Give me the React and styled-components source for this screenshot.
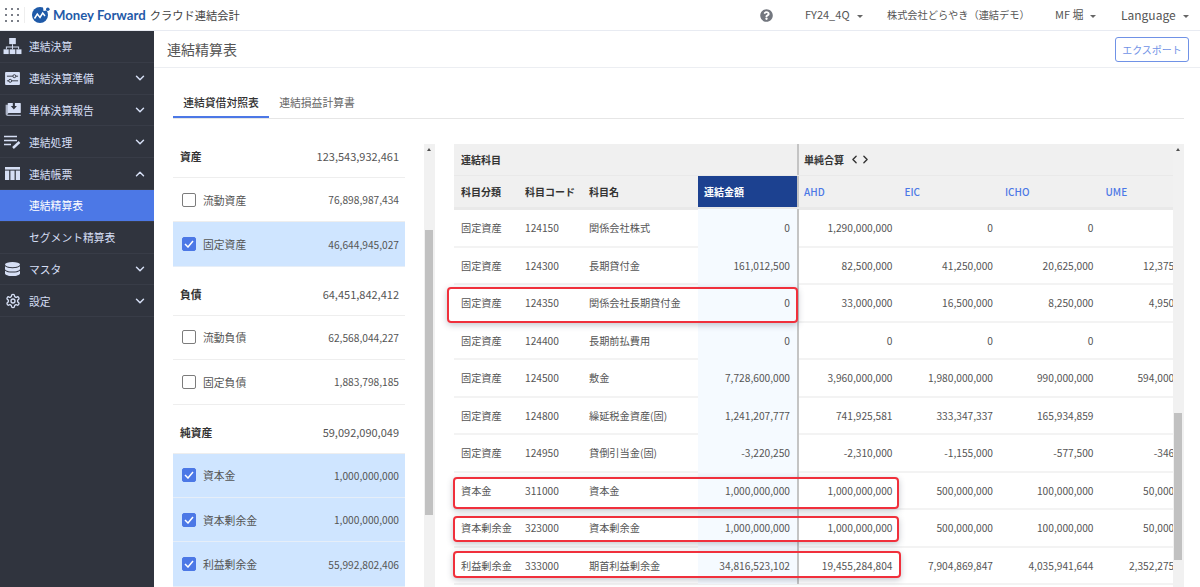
import styled, { createGlobalStyle } from "styled-components";
import { LuSettings } from "react-icons/lu";
import { FaQuestionCircle } from "react-icons/fa";
import { FiChevronDown, FiChevronUp, FiChevronLeft, FiChevronRight } from "react-icons/fi";

const GlobalStyle = createGlobalStyle`
  html, body {
    margin: 0;
    padding: 0;
    height: 587px;
    overflow: hidden;
    background: #fff;
    font-family: "Noto Sans CJK JP", "Noto Sans", sans-serif;
    color: #4a4a4a;
  }
`;

const OrgIcon = () => (
  <svg width="19" height="17" viewBox="0 0 20 18" fill="currentColor">
    <rect x="6.5" y="0" width="7" height="6.5" />
    <path d="M9.5 6.5h1V9h6.5v3h-1v-2h-5.500v2h-1v-2H4v2H3V9h6.500z" />
    <rect x="0.5" y="12" width="5.5" height="5" />
    <rect x="7" y="12" width="6" height="5" />
    <rect x="14" y="12" width="5.5" height="5" />
  </svg>
);

const SlidersIcon = () => (
  <svg width="15" height="13" viewBox="0 0 16 14">
    <rect width="16" height="14" rx="1" fill="currentColor" />
    <path d="M2 4.500h12M2 9.500h12" stroke="#30343e" strokeWidth="1" />
    <circle cx="10" cy="4.500" r="1.600" fill="currentColor" stroke="#30343e" />
    <circle cx="5.500" cy="9.500" r="1.600" fill="currentColor" stroke="#30343e" />
  </svg>
);

const InboxIcon = () => (
  <svg width="16" height="13" viewBox="0 0 18 15" fill="currentColor">
    <rect x="3" y="0" width="15" height="11.500" rx="0.500" />
    <path d="M8.800 0h2.400v3.500h2.300L10 7.500 6.500 3.500h2.300z" fill="#30343e" />
    <path d="M0.500 2v10.500C0.500 14 1.500 15 3 15h15v-1.500H3.500c-1.200 0-1.200-1 0-1V2z" opacity="0.75" />
  </svg>
);

const EditListIcon = () => (
  <svg width="17" height="14" viewBox="0 0 17 14" fill="none" stroke="currentColor">
    <path d="M0 1.500h13M0 5.500h13M0 9.500h7" strokeWidth="1.300" />
    <path d="M9 13l6.500-6" strokeWidth="2.400" />
  </svg>
);

const TableIcon = () => (
  <svg width="15" height="13" viewBox="0 0 15 13" fill="currentColor">
    <rect width="15" height="2.600" />
    <rect y="3.600" width="4.200" height="9.400" />
    <rect x="5.400" y="3.600" width="4.200" height="9.400" />
    <rect x="10.800" y="3.600" width="4.200" height="9.400" />
  </svg>
);

const DbIcon = () => (
  <svg width="15" height="14" viewBox="0 0 15 14" fill="currentColor">
    <ellipse cx="7.500" cy="2.600" rx="7.500" ry="2.600" />
    <path d="M0 4.300c1.400 1.300 4.200 1.900 7.500 1.900S13.600 5.600 15 4.300V7c0 1.400-3.400 2.600-7.500 2.600S0 8.400 0 7z" />
    <path d="M0 8.700c1.400 1.300 4.200 1.900 7.500 1.900s6.100-.6 7.500-1.900v2.700c0 1.400-3.400 2.600-7.500 2.600S0 12.800 0 11.400z" />
  </svg>
);

const LogoMark = () => (
  <svg width="18" height="16" viewBox="0 0 18 16">
    <circle cx="8" cy="8" r="8" fill="#1f5aa8" />
    <path d="M2.500 11.500l2.800-4.500 2.700 3.500 2.700-4.500 2.300 3" fill="none" stroke="#fff" strokeWidth="1.500" />
    <path d="M11 0h3.500v3.500l-3 .5z" fill="#fff" />
    <circle cx="15.800" cy="2.200" r="1.800" fill="#1f5aa8" />
  </svg>
);

const GridDots = () => (
  <svg width="14" height="14" viewBox="0 0 14 14" fill="#7b7f88">
    {[1, 7, 13].flatMap((y) =>
      [1, 7, 13].map((x) => <rect key={`${x}-${y}`} x={x - 1} y={y - 1} width="2" height="2" />)
    )}
  </svg>
);

const navItems = [
  { label: "連結決算", icon: <OrgIcon /> },
  { label: "連結決算準備", icon: <SlidersIcon />, arrow: "down" },
  { label: "単体決算報告", icon: <InboxIcon />, arrow: "down" },
  { label: "連結処理", icon: <EditListIcon />, arrow: "down" },
  { label: "連結帳票", icon: <TableIcon />, arrow: "up" },
  { label: "連結精算表", sub: true, active: true },
  { label: "セグメント精算表", sub: true },
  { label: "マスタ", icon: <DbIcon />, arrow: "down" },
  { label: "設定", icon: <LuSettings size={16} />, arrow: "down" },
];

const sideGroups = [
  {
    title: "資産",
    total: "123,543,932,461",
    items: [
      { name: "流動資産", value: "76,898,987,434" },
      { name: "固定資産", value: "46,644,945,027", checked: true },
    ],
  },
  {
    title: "負債",
    total: "64,451,842,412",
    items: [
      { name: "流動負債", value: "62,568,044,227" },
      { name: "固定負債", value: "1,883,798,185" },
    ],
  },
  {
    title: "純資産",
    total: "59,092,090,049",
    items: [
      { name: "資本金", value: "1,000,000,000", checked: true },
      { name: "資本剰余金", value: "1,000,000,000", checked: true },
      { name: "利益剰余金", value: "55,992,802,406", checked: true },
    ],
  },
];

// the UME column runs past the edge of the table, as in a scrolled grid
const rows = [
  ["固定資産", "124150", "関係会社株式", "0", "1,290,000,000", "0", "0", ""],
  ["固定資産", "124300", "長期貸付金", "161,012,500", "82,500,000", "41,250,000", "20,625,000", "12,375,000"],
  ["固定資産", "124350", "関係会社長期貸付金", "0", "33,000,000", "16,500,000", "8,250,000", "4,950,000"],
  ["固定資産", "124400", "長期前払費用", "0", "0", "0", "0", ""],
  ["固定資産", "124500", "敷金", "7,728,600,000", "3,960,000,000", "1,980,000,000", "990,000,000", "594,000,000"],
  ["固定資産", "124800", "繰延税金資産(固)", "1,241,207,777", "741,925,581", "333,347,337", "165,934,859", ""],
  ["固定資産", "124950", "貸倒引当金(固)", "-3,220,250", "-2,310,000", "-1,155,000", "-577,500", "-346,500"],
  ["資本金", "311000", "資本金", "1,000,000,000", "1,000,000,000", "500,000,000", "100,000,000", "50,000,000"],
  ["資本剰余金", "323000", "資本剰余金", "1,000,000,000", "1,000,000,000", "500,000,000", "100,000,000", "50,000,000"],
  ["利益剰余金", "333000", "期首利益剰余金", "34,816,523,102", "19,455,284,804", "7,904,869,847", "4,035,941,644", "2,352,275,000"],
];

const marks = [
  { top: 143, left: -7, width: 351, height: 36 },
  { top: 333, left: -1, width: 446, height: 32 },
  { top: 372, left: -1, width: 446, height: 26 },
  { top: 407, left: -1, width: 448, height: 27 },
];

export default function App() {
  return (
    <>
      <GlobalStyle />
      <Page>
        <Header>
          <Dots>
            <GridDots />
          </Dots>
          <Logo>
            <LogoMark />
            <LogoName>Money Forward</LogoName>
            <LogoProduct>クラウド連結会計</LogoProduct>
          </Logo>
          <HeaderMenu>
            <HelpIcon>
              <FaQuestionCircle size={13} />
            </HelpIcon>
            <MenuItem $width={82} $size={11}>
              FY24_4Q<Caret />
            </MenuItem>
            <MenuItem $width={168} $size={10.2}>株式会社どらやき（連結デモ）</MenuItem>
            <MenuItem $width={66} $size={11}>
              MF 堀<Caret />
            </MenuItem>
            <MenuItem $width={62} $size={12}>
              Language<Caret />
            </MenuItem>
          </HeaderMenu>
        </Header>
        <Body>
          <Sidebar>
            {navItems.map((item) => (
              <NavItem key={item.label} $active={item.active} $sub={item.sub}>
                {item.icon && <NavIcon>{item.icon}</NavIcon>}
                <NavLabel>{item.label}</NavLabel>
                {item.arrow === "down" && <ArrowDown />}
                {item.arrow === "up" && <ArrowUp />}
              </NavItem>
            ))}
          </Sidebar>
          <Main>
            <TitleBar>
              <Title>連結精算表</Title>
              <ExportButton>エクスポート</ExportButton>
            </TitleBar>
            <Content>
              <Tabs>
                <Tab $active>連結貸借対照表</Tab>
                <Tab>連結損益計算書</Tab>
              </Tabs>
              <Columns>
                <SidePanel>
                  {sideGroups.map((group) => (
                    <div key={group.title}>
                      <GroupHead>
                        <GroupTitle>{group.title}</GroupTitle>
                        <Amount $size={11}>{group.total}</Amount>
                      </GroupHead>
                      {group.items.map((it) => (
                        <SideRow key={it.name} $checked={it.checked}>
                          <Check $checked={it.checked}>
                            {it.checked && (
                              <svg width="10" height="8" viewBox="0 0 10 8" fill="none" stroke="#fff" strokeWidth="1.500">
                                <path d="M1 4l3 3 5-6" />
                              </svg>
                            )}
                          </Check>
                          <SideName>{it.name}</SideName>
                          <Amount $size={10.2}>{it.value}</Amount>
                        </SideRow>
                      ))}
                    </div>
                  ))}
                </SidePanel>
                <Scrollbar $left>
                  <UpArrow />
                  <Thumb $top={86} $height={285} />
                </Scrollbar>
                <TableWrap>
                  <TableClip>
                    <HeadTop>
                      <GroupCell $width={343}>連結科目</GroupCell>
                      <GroupCell $divider>
                        単純合算
                        <FiChevronLeft size={13} strokeWidth={2.5} />
                        <FiChevronRight size={13} strokeWidth={2.5} />
                      </GroupCell>
                    </HeadTop>
                    <HeadBottom>
                      <ColHead $width={64}>科目分類</ColHead>
                      <ColHead $width={64}>科目コード</ColHead>
                      <ColHead $width={116}>科目名</ColHead>
                      <TotalHead>連結金額</TotalHead>
                      <Company>AHD</Company>
                      <Company>EIC</Company>
                      <Company>ICHO</Company>
                      <Company>UME</Company>
                    </HeadBottom>
                    <Rows>
                      {rows.map((row) => (
                        <Row key={row[1]}>
                          <Cell $width={64}>{row[0]}</Cell>
                          <Cell $width={64}>{row[1]}</Cell>
                          <Cell $width={116}>{row[2]}</Cell>
                          <TotalCell>{row[3]}</TotalCell>
                          {row.slice(4).map((v, i) => (
                            <NumCell key={i}>{v}</NumCell>
                          ))}
                        </Row>
                      ))}
                    </Rows>
                  </TableClip>
                  <Scrollbar>
                    <UpArrow />
                    <Thumb $top={269} $height={147} />
                  </Scrollbar>
                  {marks.map((m) => (
                    <RedMark key={m.top} style={{ top: m.top, left: m.left, width: m.width, height: m.height }} />
                  ))}
                </TableWrap>
              </Columns>
            </Content>
          </Main>
        </Body>
      </Page>
    </>
  );
}

const Page = styled.div`
  width: 1200px;
  height: 587px;
  display: flex;
  flex-direction: column;
  overflow: hidden;
`;
const Header = styled.header`
  height: 30px;
  flex: none;
  display: flex;
  align-items: center;
  border-bottom: 1px solid #e8ebf2;
  background: #fff;
`;
const Dots = styled.div`
  width: 25px;
  height: 16px;
  padding-left: 5px;
  box-sizing: border-box;
  display: flex;
  align-items: center;
  border-right: 1px solid #eee;
`;
const Logo = styled.div`
  display: flex;
  align-items: center;
  margin-left: 7px;
`;
const LogoName = styled.span`
  font-family: "Lato", sans-serif;
  font-weight: 700;
  font-size: 13.2px;
  color: #1f5aa8;
  margin-left: 3px;
  white-space: nowrap;
`;
const LogoProduct = styled.span`
  font-size: 11.25px;
  color: #444;
  margin-left: 4px;
  white-space: nowrap;
`;
const HeaderMenu = styled.div`
  margin-left: auto;
  display: flex;
  align-items: center;
  padding-right: 17px;
`;
const HelpIcon = styled.span`
  display: flex;
  color: #73777f;
  margin-right: 32px;
`;
const MenuItem = styled.span`
  width: ${(p) => p.$width}px;
  margin-bottom: 2px;
  font-size: ${(p) => p.$size}px;
  color: #555;
  white-space: nowrap;
`;
const Caret = styled.i`
  display: inline-block;
  margin-left: 7px;
  vertical-align: middle;
  border-left: 3px solid transparent;
  border-right: 3px solid transparent;
  border-top: 3px solid #666;
`;
const Body = styled.div`
  flex: 1;
  display: flex;
  min-height: 0;
`;
const Sidebar = styled.nav`
  width: 154px;
  flex: none;
  background: #30343e;
`;
const NavItem = styled.div`
  height: 30.8px;
  border-bottom: 1px solid #383c47;
  display: flex;
  align-items: center;
  padding: 0 7px 0 ${(p) => (p.$sub ? 29 : 2)}px;
  color: ${(p) => (p.$active ? "#fff" : "#d6dff5")};
  background: ${(p) => (p.$active ? "#4c78e6" : "transparent")};
`;
const NavIcon = styled.span`
  width: 27px;
  flex: none;
  display: flex;
  justify-content: center;
  padding-right: 6px;
  box-sizing: border-box;
  color: #d6dff5;
`;
const NavLabel = styled.span`
  flex: 1;
  font-size: 10.8px;
`;
const ArrowDown = styled(FiChevronDown)`
  width: 14px;
  height: 14px;
  stroke-width: 2.5;
`;
const ArrowUp = styled(FiChevronUp)`
  width: 14px;
  height: 14px;
  stroke-width: 2.5;
`;
const Main = styled.main`
  flex: 1;
  min-width: 0;
  display: flex;
  flex-direction: column;
`;
const TitleBar = styled.div`
  height: 36px;
  flex: none;
  display: flex;
  align-items: center;
  justify-content: space-between;
  padding: 0 11px 0 13px;
  border-bottom: 1px solid #eceef2;
`;
const Title = styled.h1`
  margin: 0;
  font-size: 14px;
  font-weight: 400;
  color: #555;
`;
const ExportButton = styled.button`
  width: 74px;
  height: 25px;
  padding: 0;
  background: #fff;
  border: 1px solid #7092e6;
  border-radius: 3px;
  color: #7092e6;
  font: inherit;
  font-size: 10px;
`;
const Content = styled.div`
  flex: 1;
  min-height: 0;
  padding: 24px 16px 0 19px;
  display: flex;
  flex-direction: column;
`;
const Tabs = styled.div`
  height: 26px;
  flex: none;
  display: flex;
  border-bottom: 1px solid #e6e6e6;
`;
const Tab = styled.div`
  width: 96px;
  height: 26px;
  box-sizing: border-box;
  text-align: center;
  font-size: 10.8px;
  line-height: 21px;
  color: ${(p) => (p.$active ? "#333" : "#666")};
  border-bottom: ${(p) => (p.$active ? "2px solid #4c78e6" : "none")};
  font-weight: ${(p) => (p.$active ? 500 : 400)};
`;
const Columns = styled.div`
  flex: 1;
  min-height: 0;
  display: flex;
  padding-top: 25px;
  align-items: flex-start;
`;
const SidePanel = styled.div`
  width: 232px;
  flex: none;
  margin-right: 19px;
  margin-top: -15px;
`;
const GroupHead = styled.div`
  height: 48px;
  box-sizing: content-box;
  display: flex;
  align-items: center;
  justify-content: space-between;
  padding: 0 6px 0 7px;
  border-bottom: 1px solid #eee;
  & > * {
    position: relative;
    top: 3px;
  }
`;
const GroupTitle = styled.span`
  font-size: 10.8px;
  font-weight: 700;
  color: #333;
`;
const Amount = styled.span`
  font-size: ${(p) => p.$size}px;
  color: #555;
`;
const SideRow = styled.div`
  height: 43.4px;
  display: flex;
  align-items: center;
  padding: 0 6px 0 9px;
  border-bottom: 1px solid ${(p) => (p.$checked ? "#e6eef8" : "#eee")};
  background: ${(p) => (p.$checked ? "#cfe5ff" : "#fff")};
`;
const Check = styled.span`
  width: 12px;
  height: 12px;
  margin-right: 7px;
  border: 1px solid ${(p) => (p.$checked ? "#4c78e6" : "#7c7c7c")};
  border-radius: 2px;
  background: ${(p) => (p.$checked ? "#4c78e6" : "#fff")};
  display: flex;
  align-items: center;
  justify-content: center;
`;
const SideName = styled.span`
  flex: 1;
  font-size: 10.8px;
  color: #555;
`;
const Scrollbar = styled.div`
  position: relative;
  width: 11px;
  height: 443px;
  flex: none;
  background: #f1f1f1;
  margin-right: ${(p) => (p.$left ? 19 : 0)}px;
`;
const UpArrow = styled.i`
  position: absolute;
  top: 4px;
  left: 3px;
  border-left: 2.5px solid transparent;
  border-right: 2.5px solid transparent;
  border-bottom: 3px solid #505050;
`;
const Thumb = styled.div`
  position: absolute;
  left: 1px;
  width: 8px;
  top: ${(p) => p.$top}px;
  height: ${(p) => p.$height}px;
  background: #c1c1c1;
`;
const TableWrap = styled.div`
  position: relative;
  width: 730px;
  flex: none;
  display: flex;
  height: 443px;
`;
const TableClip = styled.div`
  width: 719px;
  overflow: hidden;
  flex: none;
`;
const HeadTop = styled.div`
  height: 32px;
  display: flex;
  align-items: center;
  background: #f0f0f0;
  border-bottom: 1px solid #e9e9e9;
  box-sizing: border-box;
`;
const GroupCell = styled.div`
  ${(p) => (p.$width ? `width: ${p.$width}px;` : "flex: 1;")}
  box-sizing: border-box;
  height: 100%;
  display: flex;
  align-items: center;
  padding-left: ${(p) => (p.$divider ? 5 : 7)}px;
  font-size: 10px;
  font-weight: 700;
  color: #333;
  border-left: ${(p) => (p.$divider ? "2px solid #c4c4c4" : "none")};
  svg:first-of-type {
    margin-left: 4px;
  }
  svg:last-of-type {
    margin-left: -2px;
  }
`;
const HeadBottom = styled.div`
  height: 31px;
  display: flex;
  align-items: center;
  background: #f0f0f0;
  border-bottom: 3px solid #e9e9e9;
`;
const ColHead = styled.div`
  width: ${(p) => p.$width}px;
  padding-left: 7px;
  box-sizing: border-box;
  font-size: 10px;
  font-weight: 700;
  color: #333;
  flex: none;
`;
const TotalHead = styled.div`
  width: 99px;
  height: 100%;
  flex: none;
  padding-left: 6px;
  box-sizing: border-box;
  display: flex;
  align-items: center;
  background: #1c4190;
  color: #fff;
  font-size: 10px;
  font-weight: 700;
  margin-right: 2px;
  box-shadow: 2px 0 0 #c4c4c4;
`;
const Company = styled.div`
  width: 100.5px;
  flex: none;
  padding-left: 5px;
  box-sizing: border-box;
  font-size: 10px;
  font-weight: 500;
  color: #4c78e6;
`;
const Rows = styled.div`
  padding-top: 0;
`;
const Row = styled.div`
  height: 37.5px;
  display: flex;
  align-items: center;
  box-sizing: border-box;
  border-bottom: 2px solid #f3f3f3;
  white-space: nowrap;
`;
const Cell = styled.div`
  width: ${(p) => p.$width}px;
  flex: none;
  padding-left: 7px;
  box-sizing: border-box;
  font-size: 10.2px;
  color: #555;
`;
const TotalCell = styled.div`
  width: 99px;
  height: 37.5px;
  flex: none;
  box-sizing: border-box;
  padding-right: 7px;
  display: flex;
  align-items: center;
  justify-content: flex-end;
  font-size: 10.2px;
  color: #555;
  background: #f5faff;
  box-shadow: 2px 0 0 #c4c4c4;
  margin-right: 2px;
`;
const NumCell = styled.div`
  width: 100.5px;
  flex: none;
  padding-right: 7px;
  box-sizing: border-box;
  text-align: right;
  font-size: 10.2px;
  color: #555;
`;
const RedMark = styled.div`
  position: absolute;
  box-sizing: border-box;
  border: 2px solid #f0303c;
  border-radius: 4px;
  box-shadow: 0 2px 6px rgba(60, 70, 90, 0.3);
`;
